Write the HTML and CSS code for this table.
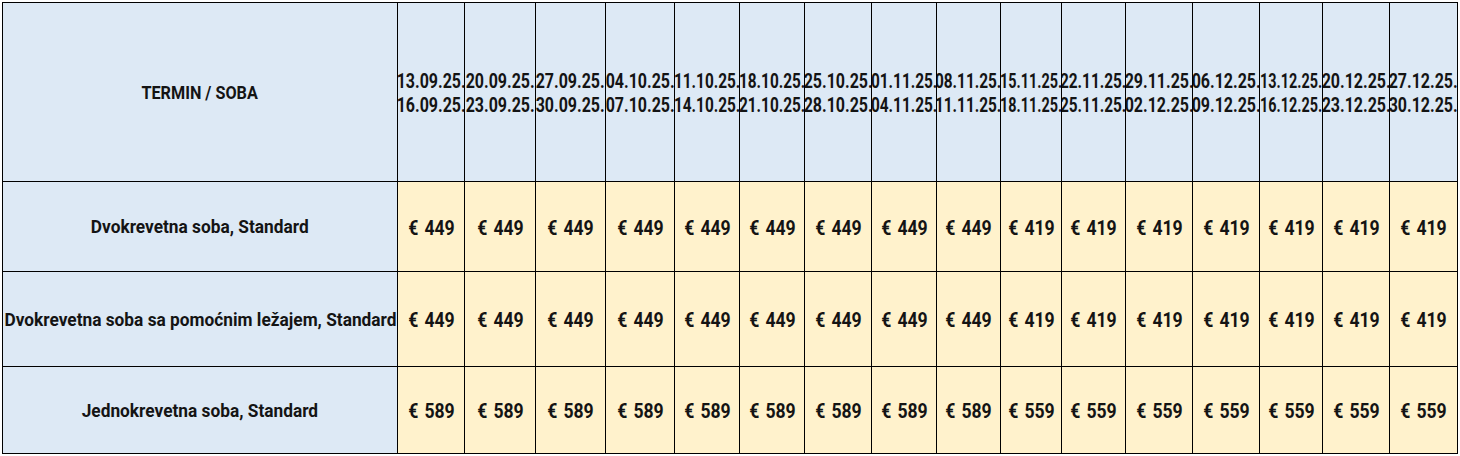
FILE: index.html
```html
<!DOCTYPE html>
<html>
<head>
<meta charset="utf-8">
<link rel="stylesheet" href="styles.css">
</head>
<body>
<div class="wrap">
<table class="prices">
<colgroup>
<col class="c-room">
<col style="width:67px"><col style="width:71px"><col style="width:70px"><col style="width:69px">
<col style="width:65px"><col style="width:65px"><col style="width:67px"><col style="width:65px">
<col style="width:64px"><col style="width:61px"><col style="width:64px"><col style="width:67px">
<col style="width:67px"><col style="width:63px"><col style="width:67px"><col style="width:68px">
</colgroup>
<tr class="r-head">
<th class="room"><div class="in"><span class="t t-head">TERMIN / SOBA</span></div></th>
<th><div class="in"><span class="t t-date">13.09.25.<br>16.09.25.</span></div></th>
<th><div class="in"><span class="t t-date">20.09.25.<br>23.09.25.</span></div></th>
<th><div class="in"><span class="t t-date">27.09.25.<br>30.09.25.</span></div></th>
<th><div class="in"><span class="t t-date">04.10.25.<br>07.10.25.</span></div></th>
<th><div class="in"><span class="t t-date t-date--snug">11.10.25.<br>14.10.25.</span></div></th>
<th><div class="in"><span class="t t-date t-date--snug">18.10.25.<br>21.10.25.</span></div></th>
<th><div class="in"><span class="t t-date">25.10.25.<br>28.10.25.</span></div></th>
<th><div class="in"><span class="t t-date t-date--snug">01.11.25.<br>04.11.25.</span></div></th>
<th><div class="in"><span class="t t-date t-date--snug">08.11.25.<br>11.11.25.</span></div></th>
<th><div class="in"><span class="t t-date t-date--tight">15.11.25.<br>18.11.25.</span></div></th>
<th><div class="in"><span class="t t-date t-date--snug">22.11.25.<br>25.11.25.</span></div></th>
<th><div class="in"><span class="t t-date">29.11.25.<br>02.12.25.</span></div></th>
<th><div class="in"><span class="t t-date">06.12.25.<br>09.12.25.</span></div></th>
<th><div class="in"><span class="t t-date t-date--tight">13.12.25.<br>16.12.25.</span></div></th>
<th><div class="in"><span class="t t-date">20.12.25.<br>23.12.25.</span></div></th>
<th><div class="in"><span class="t t-date">27.12.25.<br>30.12.25.</span></div></th>
</tr>
<tr class="r1">
<th class="room"><div class="in"><span class="t t-room">Dvokrevetna soba, Standard</span></div></th>
<td><div class="in"><span class="t t-price">€ 449</span></div></td><td><div class="in"><span class="t t-price">€ 449</span></div></td><td><div class="in"><span class="t t-price">€ 449</span></div></td><td><div class="in"><span class="t t-price">€ 449</span></div></td><td><div class="in"><span class="t t-price">€ 449</span></div></td><td><div class="in"><span class="t t-price">€ 449</span></div></td><td><div class="in"><span class="t t-price">€ 449</span></div></td><td><div class="in"><span class="t t-price">€ 449</span></div></td><td><div class="in"><span class="t t-price">€ 449</span></div></td>
<td><div class="in"><span class="t t-price">€ 419</span></div></td><td><div class="in"><span class="t t-price">€ 419</span></div></td><td><div class="in"><span class="t t-price">€ 419</span></div></td><td><div class="in"><span class="t t-price">€ 419</span></div></td><td><div class="in"><span class="t t-price">€ 419</span></div></td><td><div class="in"><span class="t t-price">€ 419</span></div></td><td><div class="in"><span class="t t-price">€ 419</span></div></td>
</tr>
<tr class="r2">
<th class="room"><div class="in"><span class="t t-room">Dvokrevetna soba sa pomoćnim ležajem, Standard</span></div></th>
<td><div class="in"><span class="t t-price">€ 449</span></div></td><td><div class="in"><span class="t t-price">€ 449</span></div></td><td><div class="in"><span class="t t-price">€ 449</span></div></td><td><div class="in"><span class="t t-price">€ 449</span></div></td><td><div class="in"><span class="t t-price">€ 449</span></div></td><td><div class="in"><span class="t t-price">€ 449</span></div></td><td><div class="in"><span class="t t-price">€ 449</span></div></td><td><div class="in"><span class="t t-price">€ 449</span></div></td><td><div class="in"><span class="t t-price">€ 449</span></div></td>
<td><div class="in"><span class="t t-price">€ 419</span></div></td><td><div class="in"><span class="t t-price">€ 419</span></div></td><td><div class="in"><span class="t t-price">€ 419</span></div></td><td><div class="in"><span class="t t-price">€ 419</span></div></td><td><div class="in"><span class="t t-price">€ 419</span></div></td><td><div class="in"><span class="t t-price">€ 419</span></div></td><td><div class="in"><span class="t t-price">€ 419</span></div></td>
</tr>
<tr class="r3">
<th class="room"><div class="in"><span class="t t-room">Jednokrevetna soba, Standard</span></div></th>
<td><div class="in"><span class="t t-price">€ 589</span></div></td><td><div class="in"><span class="t t-price">€ 589</span></div></td><td><div class="in"><span class="t t-price">€ 589</span></div></td><td><div class="in"><span class="t t-price">€ 589</span></div></td><td><div class="in"><span class="t t-price">€ 589</span></div></td><td><div class="in"><span class="t t-price">€ 589</span></div></td><td><div class="in"><span class="t t-price">€ 589</span></div></td><td><div class="in"><span class="t t-price">€ 589</span></div></td><td><div class="in"><span class="t t-price">€ 589</span></div></td>
<td><div class="in"><span class="t t-price">€ 559</span></div></td><td><div class="in"><span class="t t-price">€ 559</span></div></td><td><div class="in"><span class="t t-price">€ 559</span></div></td><td><div class="in"><span class="t t-price">€ 559</span></div></td><td><div class="in"><span class="t t-price">€ 559</span></div></td><td><div class="in"><span class="t t-price">€ 559</span></div></td><td><div class="in"><span class="t t-price">€ 559</span></div></td>
</tr>
</table>
</div>
</body>
</html>
```

FILE: styles.css
```css
html, body {
  margin: 0;
  padding: 0;
  background: #ffffff;
}
.wrap {
  padding: 2px 0 0 2px;
}
.prices {
  border-collapse: collapse;
  table-layout: fixed;
  width: 1456px;
  font-family: Roboto, "DejaVu Sans", sans-serif;
  font-weight: 700;
  font-size: 20px;
  color: #141414;
}
.c-room { width: 395px; }
.prices th, .prices td {
  border: 1px solid #000;
  padding: 0;
  vertical-align: middle;
  overflow: hidden;
}
.prices th {
  background: #dde9f5;
  font-weight: 700;
}
.prices td {
  background: #fff2cc;
}
.in {
  display: flex;
  justify-content: center;
  align-items: center;
}
.t {
  display: block;
  flex: none;
  white-space: nowrap;
  text-align: center;
  transform-origin: center center;
  transform: scaleX(0.8);
}
.t-date {
  line-height: 24px;
  font-size: 20px;
  padding-top: 2px;
}
.t-date--snug {
  transform: scaleX(0.77);
}
.t-date--tight {
  transform: scaleX(0.72);
}
.t-head {
  font-size: 18px;
  transform: scaleX(0.9);
}
.t-room {
  font-size: 19px;
  transform: scaleX(0.91);
}
.t-price {
  font-size: 20px;
  word-spacing: 2px;
  transform: scaleX(0.88);
  padding-top: 2px;
}
.r-head { height: 179px; }
.r1 { height: 90px; }
.r2 { height: 95px; }
.r3 { height: 87px; }
```
